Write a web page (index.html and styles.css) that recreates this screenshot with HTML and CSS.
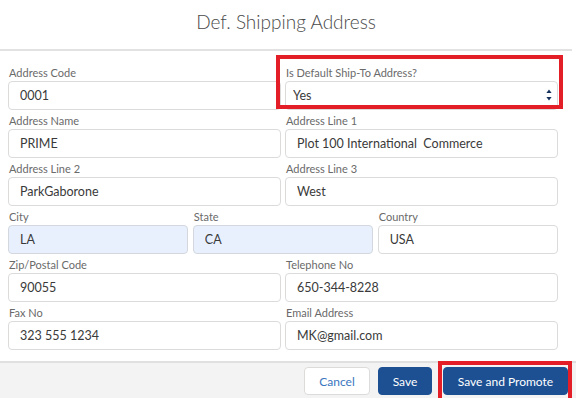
FILE: index.html
```html
<!DOCTYPE html>
<html lang="en">
<head>
<meta charset="utf-8">
<title>Def. Shipping Address</title>
<link rel="stylesheet" href="styles.css">
</head>
<body>
<div class="modal">
  <header class="modal-header">
    <h1 class="title">Def. Shipping Address</h1>
  </header>
  <form class="form">
    <div class="row row2">
      <label class="field">
        <span class="label">Address Code</span>
        <input class="input" type="text" value="0001">
      </label>
      <div class="field field-hl">
        <span class="label">Is Default Ship-To Address?</span>
        <div class="select-wrap">
          <select class="select"><option>Yes</option><option>No</option></select>
          <svg class="select-arrows" width="6" height="14" viewBox="0 0 6 14"><path d="M3 1.5 L5.6 5 L0.4 5 Z M0.4 9 L5.6 9 L3 12.5 Z" fill="#16325c"/></svg>
        </div>
      </div>
    </div>
    <div class="row row2">
      <label class="field">
        <span class="label">Address Name</span>
        <input class="input" type="text" value="PRIME">
      </label>
      <label class="field">
        <span class="label">Address Line 1</span>
        <input class="input" type="text" value="Plot 100 International  Commerce">
      </label>
    </div>
    <div class="row row2">
      <label class="field">
        <span class="label">Address Line 2</span>
        <input class="input" type="text" value="ParkGaborone">
      </label>
      <label class="field">
        <span class="label">Address Line 3</span>
        <input class="input" type="text" value="West">
      </label>
    </div>
    <div class="row row3">
      <label class="field">
        <span class="label">City</span>
        <input class="input input-fill" type="text" value="LA">
      </label>
      <label class="field">
        <span class="label">State</span>
        <input class="input input-fill" type="text" value="CA">
      </label>
      <label class="field">
        <span class="label">Country</span>
        <input class="input" type="text" value="USA">
      </label>
    </div>
    <div class="row row2">
      <label class="field">
        <span class="label">Zip/Postal Code</span>
        <input class="input" type="text" value="90055">
      </label>
      <label class="field">
        <span class="label">Telephone No</span>
        <input class="input" type="text" value="650-344-8228">
      </label>
    </div>
    <div class="row row2">
      <label class="field">
        <span class="label">Fax No</span>
        <input class="input" type="text" value="323 555 1234">
      </label>
      <label class="field">
        <span class="label">Email Address</span>
        <input class="input" type="text" value="MK@gmail.com">
      </label>
    </div>
  </form>
  <footer class="modal-footer">
    <button class="btn btn-neutral btn-cancel" type="button">Cancel</button>
    <button class="btn btn-brand btn-save" type="button">Save</button>
    <span class="hl-wrap"><button class="btn btn-brand btn-promote" type="button">Save and Promote</button></span>
  </footer>
</div>
</body>
</html>
```

FILE: styles.css
```css
* { box-sizing: border-box; }
html, body { margin: 0; padding: 0; }
body {
  width: 576px;
  height: 398px;
  overflow: hidden;
  background: #ffffff;
  font-family: Lato, "Open Sans", "Liberation Sans", sans-serif;
  color: #333;
}
.modal {
  height: 398px;
  display: flex;
  flex-direction: column;
}
.modal-header {
  height: 51px;
  border-bottom: 2px solid #e2e2e2;
  margin-right: 4px;
  text-align: center;
}
.title {
  margin: 0;
  font-size: 19px;
  font-weight: 300;
  line-height: 43px;
  color: #4a4a4a;
}
.form {
  padding: 13px 18px 0 8px;
}
.row {
  display: grid;
  margin-bottom: 2px;
}
.row2 { grid-template-columns: 1fr 1fr; column-gap: 4px; }
.row3 { grid-template-columns: 1fr 1fr 1fr; column-gap: 4.5px; }
.field {
  display: flex;
  flex-direction: column;
  position: relative;
}
.label {
  display: block;
  font-size: 11px;
  line-height: 17px;
  color: #6a6a6a;
  padding-left: 1px;
}
.input, .select {
  height: 29px;
  width: 100%;
  border: 1px solid #dddbda;
  border-radius: 4px;
  background: #fff;
  font-family: inherit;
  font-size: 12.5px;
  color: #3a3a3a;
  padding: 0 10px 0 11px;
  margin: 0;
  outline: none;
}
.input-fill {
  background: #e8f0fe;
  border-color: #d4d8de;
}
.select-wrap { position: relative; }
.select {
  -webkit-appearance: none;
  appearance: none;
  padding-left: 7px;
}
.select-arrows {
  position: absolute;
  right: 6px;
  top: 7px;
  pointer-events: none;
}
.field-hl::after {
  content: "";
  position: absolute;
  left: -9px;
  top: -9px;
  right: -5px;
  bottom: 1px;
  border: 4px solid #e41e26;
  pointer-events: none;
}
.modal-footer {
  margin-top: auto;
  height: 37px;
  border-top: 2px solid #e0e0e0;
  background: #f3f3f3;
  display: flex;
  justify-content: flex-end;
  align-items: flex-start;
  padding: 4px 8px 0 0;
}
.btn {
  height: 28px;
  border-radius: 4px;
  font-family: inherit;
  font-size: 12px;
  padding: 0;
  cursor: pointer;
}
.btn-neutral {
  background: #fff;
  border: 1px solid #dddbda;
  color: #3a76c0;
}
.btn-brand {
  background: #1d5093;
  border: 1px solid #1d5093;
  color: #fff;
}
.btn-cancel { width: 66px; }
.btn-save { width: 54px; margin-left: 8px; }
.hl-wrap {
  position: relative;
  display: block;
  margin-left: 11px;
}
.btn-promote { width: 125px; display: block; }
.hl-wrap::after {
  content: "";
  position: absolute;
  left: -5px;
  top: -6px;
  right: -4px;
  bottom: -8px;
  border: 4px solid #e41e26;
  pointer-events: none;
}
```
